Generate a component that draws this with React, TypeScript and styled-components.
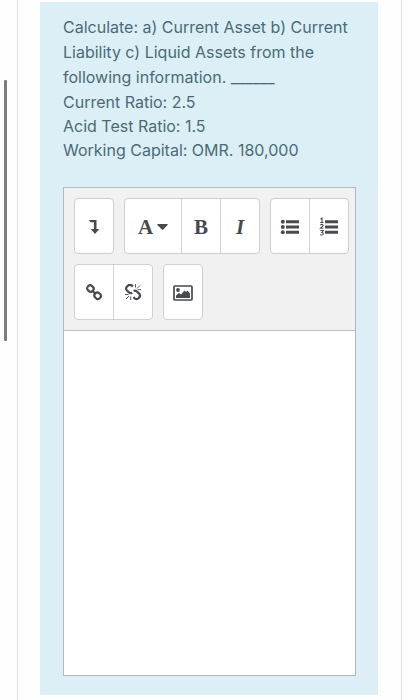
import React from "react";
import styled, { createGlobalStyle } from "styled-components";

const GlobalStyle = createGlobalStyle`
  *, *::before, *::after { box-sizing: border-box; }
  body {
    margin: 0;
    background: #fefefe;
    font-family: Inter, "Liberation Sans", sans-serif;
  }
`;

const Page = styled.div`
  display: flex;
  min-height: 100vh;
  padding: 0 18px 0 17px;
`;

const ScrollThumb = styled.div`
  position: fixed;
  left: 4px;
  top: 80px;
  width: 3px;
  height: 261px;
  border-radius: 1px;
  background: #7c7c7c;
`;

const Card = styled.main`
  flex: 1;
  min-width: 0;
  padding: 2px 23px 5px 22px;
  border: solid #dedede;
  border-width: 0 1px;
`;

const Panel = styled.section`
  padding: 13px 22px 19px 23px;
  background: #dceff7;
`;

const Question = styled.p`
  margin: 0;
  color: #4a6b75;
  font-size: 16px;
  line-height: 25px;
`;

const Facts = styled.ul`
  margin: 0 0 25px;
  padding: 0;
  list-style: none;
  color: #4a6b75;
  font-size: 16px;
  line-height: 24px;
`;

const Fact = styled.li`
  line-height: inherit;
`;

const Editor = styled.div`
  display: flex;
  flex-direction: column;
  border: 1px solid #b1b9bd;
  background: #fff;
`;

const Toolbar = styled.div`
  display: flex;
  flex-wrap: wrap;
  gap: 10px;
  padding: 10px 5px 10px 10px;
  border-bottom: 1px solid #c2c2c2;
  background: #f1f1f1;
`;

const Group = styled.div`
  display: flex;
  height: 56px;
  border: 1px solid #cfcfcf;
  border-radius: 4px;
  background: #fff;
  overflow: hidden;
`;

const ToolButton = styled.button<{ $wide?: boolean }>`
  display: flex;
  align-items: center;
  justify-content: center;
  gap: 4px;
  width: ${(p) => (p.$wide ? 56 : 38)}px;
  padding: 2px 0 0;
  border: 0;
  background: transparent;
  color: #474a4f;
  cursor: pointer;

  & + & {
    width: 39px;
    border-left: 1px solid #d3d3d3;
  }
`;

const Letter = styled.span<{ $italic?: boolean }>`
  font-family: "Liberation Serif", serif;
  font-size: 21px;
  font-weight: 700;
  font-style: ${(p) => (p.$italic ? "italic" : "normal")};
  line-height: 24px;
`;

const Answer = styled.textarea`
  display: block;
  width: 100%;
  height: 344px;
  padding: 10px;
  border: 0;
  outline: 0;
  resize: none;
  background: #fff;
  color: #474a4f;
  font: inherit;
`;

const ExpandIcon = () => (
  <svg width="12" height="16" viewBox="0 0 12 16" fill="currentColor" aria-hidden="true">
    <path d="M.8 1H8.500V10H11.300L7 15 2.700 10H5.900V3.200H2.500z" />
  </svg>
);

const CaretIcon = () => (
  <svg width="11" height="6" viewBox="0 0 11 6" fill="currentColor" aria-hidden="true">
    <path d="M.6 0h9.800Q11 .3 10.600.9L6.200 5.500Q5.500 6 4.800 5.500L.4.9Q0 .3.6 0z" />
  </svg>
);

const BulletsIcon = () => (
  <svg width="20" height="18" viewBox="0 0 20 18" fill="currentColor" aria-hidden="true">
    <circle cx="2.800" cy="3.800" r="2" />
    <circle cx="2.800" cy="9" r="2" />
    <circle cx="2.800" cy="14.200" r="2" />
    <path d="M6 2.300h13v3H6zM6 7.500h13v3H6zM6 12.700h13v3H6z" />
  </svg>
);

const NumbersIcon = () => (
  <svg width="20" height="20" viewBox="0 0 20 20" fill="currentColor" aria-hidden="true">
    <path d="M6 3.300h13v3H6zM6 8.500h13v3H6zM6 13.700h13v3H6z" />
    <path
      d="M1.500 2 3 1.200V5M1.300 5.500h3.200M1.300 8.200Q3 6.800 4.100 8q.3 1-2.600 3.200h3M1.300 13.500h3L2.800 15.500q1.800 0 1.400 1.700-.7 1.400-3 .5"
      fill="none"
      stroke="currentColor"
      strokeWidth="1.100"
    />
  </svg>
);

const LinkIcon = () => (
  <svg width="18" height="18" viewBox="0 1 18 18" fill="none" stroke="currentColor" aria-hidden="true">
    <g strokeWidth="2.200">
      <rect x="2.200" y="2.600" width="6.400" height="5.800" rx="2.600" transform="rotate(45 5.400 5.500)" />
      <rect x="9.400" y="9.800" width="6.400" height="5.800" rx="2.600" transform="rotate(45 12.600 12.700)" />
      <path d="M7 7.800 11 10.700" />
    </g>
  </svg>
);

const UnlinkIcon = () => (
  <svg width="18" height="18" viewBox="0 1 18 18" fill="none" stroke="currentColor" aria-hidden="true">
    <path
      d="M8.800 3.600 7.500 2.400Q5.700 1.100 4 2.600L2.700 3.900Q1.300 5.600 2.800 7.300L5.200 9.600Q6.800 10.600 8.200 9.700M9.600 7.900Q11.400 7.100 12.900 8.500L15.500 11.100Q16.800 12.800 15.300 14.400L14.200 15.500Q12.500 16.900 10.800 15.500L9.400 14.100"
      strokeWidth="2.200"
    />
    <path
      d="M11.500 1v3.500M16 2.500l-3 3M17 6.700h-3.500M1 11.500h3.500M2 16l3-3M6.700 13.500V17"
      strokeWidth="0.900"
    />
  </svg>
);

const ImageIcon = () => (
  <svg width="20" height="16" viewBox="0 0 20 16" fill="currentColor" aria-hidden="true">
    <rect x="1" y="1" width="18" height="14" rx="1" fill="none" stroke="currentColor" strokeWidth="1.700" />
    <circle cx="5" cy="5" r="1.900" />
    <path d="M3 13v-2.500l3-2.500 2 1.500L11.500 5.500 13 7l1.500-1.500 2.500 3V13z" />
  </svg>
);

export default function App() {
  return (
    <>
      <GlobalStyle />
      <ScrollThumb />
      <Page>
        <Card>
          <Panel>
            <Question id="question">
              Calculate: a) Current Asset b) Current Liability c) Liquid Assets from the following
              information. ______
            </Question>
            <Facts>
              <Fact>Current Ratio: 2.5</Fact>
              <Fact>Acid Test Ratio: 1.5</Fact>
              <Fact>Working Capital: OMR. 180,000</Fact>
            </Facts>
            <Editor>
              <Toolbar role="toolbar" aria-label="Formatting">
                <Group>
                  <ToolButton type="button" aria-label="Show more buttons"><ExpandIcon /></ToolButton>
                </Group>
                <Group>
                  <ToolButton type="button" $wide aria-label="Paragraph styles">
                    <Letter>A</Letter>
                    <CaretIcon />
                  </ToolButton>
                  <ToolButton type="button" aria-label="Bold"><Letter>B</Letter></ToolButton>
                  <ToolButton type="button" aria-label="Italic"><Letter $italic>I</Letter></ToolButton>
                </Group>
                <Group>
                  <ToolButton type="button" aria-label="Unordered list"><BulletsIcon /></ToolButton>
                  <ToolButton type="button" aria-label="Ordered list"><NumbersIcon /></ToolButton>
                </Group>
                <Group>
                  <ToolButton type="button" aria-label="Link"><LinkIcon /></ToolButton>
                  <ToolButton type="button" aria-label="Unlink"><UnlinkIcon /></ToolButton>
                </Group>
                <Group>
                  <ToolButton type="button" aria-label="Image"><ImageIcon /></ToolButton>
                </Group>
              </Toolbar>
              <Answer aria-labelledby="question" />
            </Editor>
          </Panel>
        </Card>
      </Page>
    </>
  );
}
